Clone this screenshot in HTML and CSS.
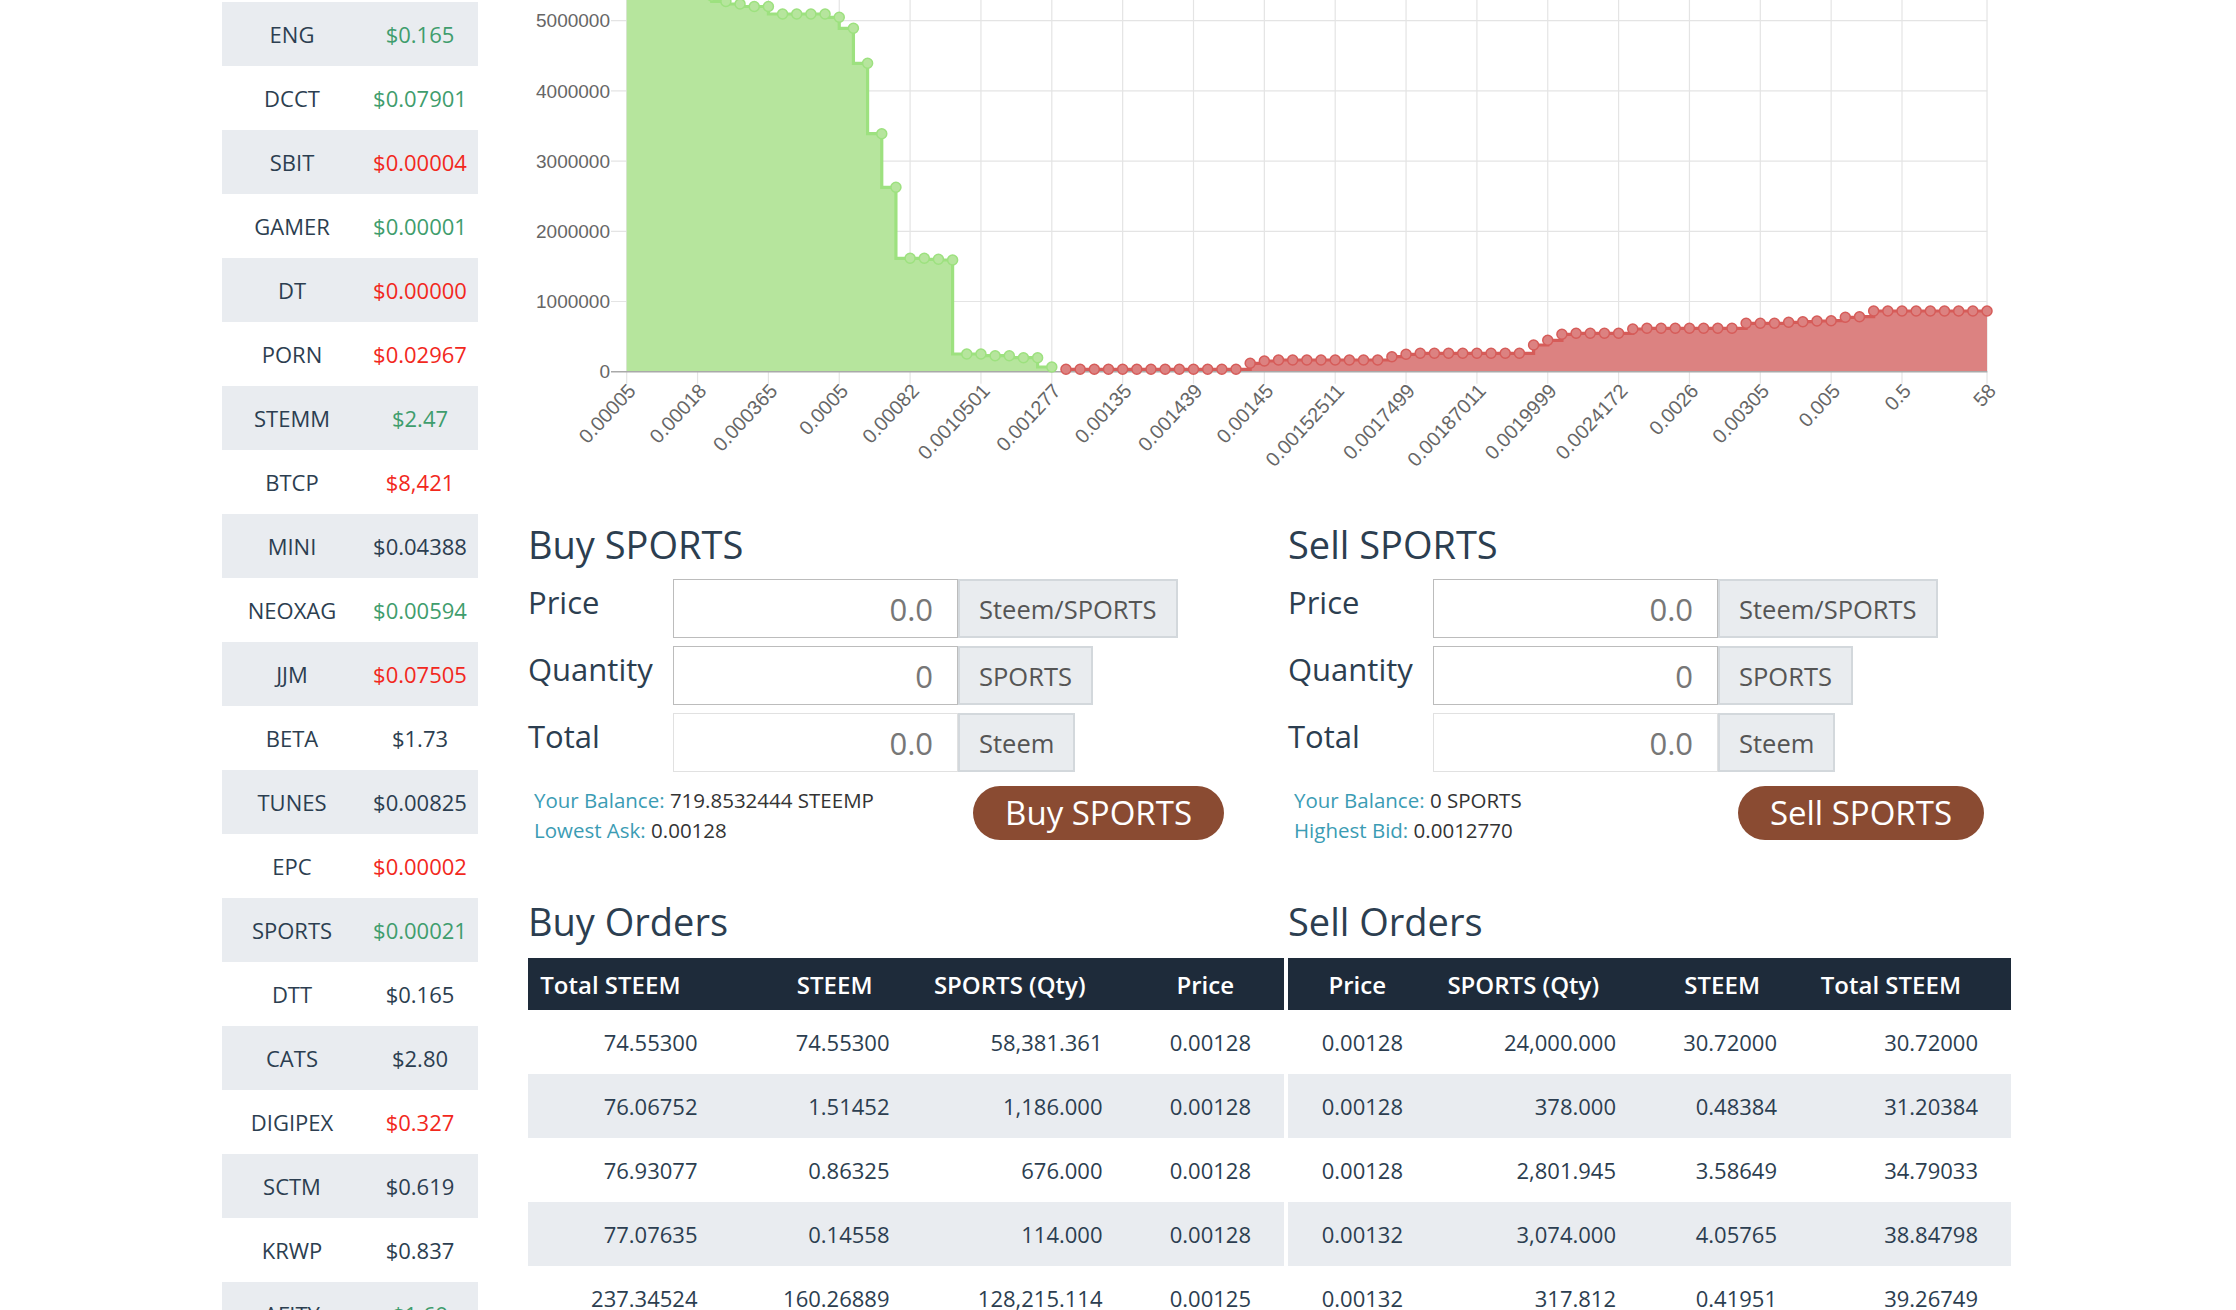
FILE: index.html
```html
<!DOCTYPE html>
<html lang="en">
<head>
<meta charset="utf-8">
<title>SPORTS Market</title>
<link rel="stylesheet" href="styles.css">
</head>
<body>
<div class="layout">
  <aside class="markets">
    <table class="market-table">
      <colgroup><col class="c-sym"><col class="c-px"></colgroup>
      <tbody>
        <tr><td>ENG</td><td class="up">$0.165</td></tr>
        <tr><td>DCCT</td><td class="up">$0.07901</td></tr>
        <tr><td>SBIT</td><td class="down">$0.00004</td></tr>
        <tr><td>GAMER</td><td class="up">$0.00001</td></tr>
        <tr><td>DT</td><td class="down">$0.00000</td></tr>
        <tr><td>PORN</td><td class="down">$0.02967</td></tr>
        <tr><td>STEMM</td><td class="up">$2.47</td></tr>
        <tr><td>BTCP</td><td class="down">$8,421</td></tr>
        <tr><td>MINI</td><td>$0.04388</td></tr>
        <tr><td>NEOXAG</td><td class="up">$0.00594</td></tr>
        <tr><td>JJM</td><td class="down">$0.07505</td></tr>
        <tr><td>BETA</td><td>$1.73</td></tr>
        <tr><td>TUNES</td><td>$0.00825</td></tr>
        <tr><td>EPC</td><td class="down">$0.00002</td></tr>
        <tr><td>SPORTS</td><td class="up">$0.00021</td></tr>
        <tr><td>DTT</td><td>$0.165</td></tr>
        <tr><td>CATS</td><td>$2.80</td></tr>
        <tr><td>DIGIPEX</td><td class="down">$0.327</td></tr>
        <tr><td>SCTM</td><td>$0.619</td></tr>
        <tr><td>KRWP</td><td>$0.837</td></tr>
        <tr><td>AFITY</td><td class="up">$1.69</td></tr>
      </tbody>
    </table>
  </aside>

  <main class="exchange">
    <svg id="depth" class="depth-chart" width="1483" height="500" viewBox="0 0 1483 500" xmlns="http://www.w3.org/2000/svg"></svg>

    <section class="trade-forms">
      <form class="trade-form">
        <h2 class="form-title">Buy SPORTS</h2>
        <div class="field-row">
          <label class="field-label">Price</label>
          <input class="field-input" type="text" value="0.0">
          <span class="field-addon">Steem/SPORTS</span>
        </div>
        <div class="field-row">
          <label class="field-label">Quantity</label>
          <input class="field-input" type="text" value="0">
          <span class="field-addon">SPORTS</span>
        </div>
        <div class="field-row last">
          <label class="field-label">Total</label>
          <input class="field-input readonly" type="text" value="0.0" readonly>
          <span class="field-addon">Steem</span>
        </div>
        <div class="trade-footer">
          <div class="balance">
            <div><span class="k">Your Balance:</span> 719.8532444 STEEMP</div>
            <div><span class="k">Lowest Ask:</span> 0.00128</div>
          </div>
          <button class="trade-btn" type="button">Buy SPORTS</button>
        </div>
      </form>

      <form class="trade-form">
        <h2 class="form-title">Sell SPORTS</h2>
        <div class="field-row">
          <label class="field-label">Price</label>
          <input class="field-input" type="text" value="0.0">
          <span class="field-addon">Steem/SPORTS</span>
        </div>
        <div class="field-row">
          <label class="field-label">Quantity</label>
          <input class="field-input" type="text" value="0">
          <span class="field-addon">SPORTS</span>
        </div>
        <div class="field-row last">
          <label class="field-label">Total</label>
          <input class="field-input readonly" type="text" value="0.0" readonly>
          <span class="field-addon">Steem</span>
        </div>
        <div class="trade-footer">
          <div class="balance">
            <div><span class="k">Your Balance:</span> 0 SPORTS</div>
            <div><span class="k">Highest Bid:</span> 0.0012770</div>
          </div>
          <button class="trade-btn" type="button">Sell SPORTS</button>
        </div>
      </form>
    </section>

    <section class="orders">
      <div class="order-col">
        <h2 class="orders-title">Buy Orders</h2>
        <table class="order-table">
          <colgroup><col class="b1"><col class="b2"><col class="b3"><col class="b4"></colgroup>
          <thead><tr><th>Total STEEM</th><th>STEEM</th><th>SPORTS (Qty)</th><th>Price</th></tr></thead>
          <tbody>
            <tr><td>74.55300</td><td>74.55300</td><td>58,381.361</td><td>0.00128</td></tr>
            <tr><td>76.06752</td><td>1.51452</td><td>1,186.000</td><td>0.00128</td></tr>
            <tr><td>76.93077</td><td>0.86325</td><td>676.000</td><td>0.00128</td></tr>
            <tr><td>77.07635</td><td>0.14558</td><td>114.000</td><td>0.00128</td></tr>
            <tr><td>237.34524</td><td>160.26889</td><td>128,215.114</td><td>0.00125</td></tr>
          </tbody>
        </table>
      </div>
      <div class="order-col">
        <h2 class="orders-title">Sell Orders</h2>
        <table class="order-table">
          <colgroup><col class="s1"><col class="s2"><col class="s3"><col class="s4"></colgroup>
          <thead><tr><th>Price</th><th>SPORTS (Qty)</th><th>STEEM</th><th>Total STEEM</th></tr></thead>
          <tbody>
            <tr><td>0.00128</td><td>24,000.000</td><td>30.72000</td><td>30.72000</td></tr>
            <tr><td>0.00128</td><td>378.000</td><td>0.48384</td><td>31.20384</td></tr>
            <tr><td>0.00128</td><td>2,801.945</td><td>3.58649</td><td>34.79033</td></tr>
            <tr><td>0.00132</td><td>3,074.000</td><td>4.05765</td><td>38.84798</td></tr>
            <tr><td>0.00132</td><td>317.812</td><td>0.41951</td><td>39.26749</td></tr>
          </tbody>
        </table>
      </div>
    </section>
  </main>
</div>
<script src="script.js"></script>
</body>
</html>
```

FILE: styles.css
```css
* { box-sizing: border-box; }
html, body { margin: 0; padding: 0; background: #fff; }
body {
  font-family: "Open Sans", "Liberation Sans", sans-serif;
  color: #2c3e50;
  height: 1310px;
  overflow: hidden;
}
.layout {
  display: flex;
  align-items: flex-start;
  gap: 50px;
  padding-left: 222px;
}

/* sidebar market list */
.markets { width: 256px; flex: none; margin-top: 2px; }
.market-table {
  width: 256px;
  border-collapse: collapse;
  table-layout: fixed;
  font-size: 22px;
}
.market-table .c-sym { width: 140px; }
.market-table .c-px { width: 116px; }
.market-table td {
  height: 64px;
  padding: 0;
  text-align: center;
  vertical-align: middle;
  white-space: nowrap;
}
.market-table tr:nth-child(odd) td { background: #e9ecf0; }
.up { color: #3f9d6d; }
.down { color: #f2281d; }

/* main column */
.exchange { width: 1483px; flex: none; }
.depth-chart { display: block; width: 1483px; height: 500px; overflow: hidden; }
.depth-chart .grid-line { stroke: #e4e4e4; stroke-width: 1.2; }
.depth-chart .axis-line { stroke: #a9a9a9; stroke-width: 1.4; }
.depth-chart .bid-fill { fill: #b6e59d; }
.depth-chart .bid-line { fill: none; stroke: #9de17f; stroke-width: 3.2; }
.depth-chart .bid-dot { fill: #b6e59d; stroke: #9de17f; stroke-width: 1.5; }
.depth-chart .ask-fill { fill: #dc8281; }
.depth-chart .ask-line { fill: none; stroke: #d65c59; stroke-width: 3.2; }
.depth-chart .ask-dot { fill: #dc8281; stroke: #d65c59; stroke-width: 1.5; }
.depth-chart .ylab,
.depth-chart .xlab {
  font-family: "Liberation Sans", Arial, sans-serif;
  fill: #666;
}
.depth-chart .ylab { font-size: 19px; }
.depth-chart .xlab { font-size: 20px; }

/* buy / sell forms */
.trade-forms {
  display: grid;
  grid-template-columns: 756px 723px;
  column-gap: 4px;
  margin-top: 21px;
}
.trade-form { width: 696px; margin: 0; }
.form-title {
  margin: 0 0 12px;
  font-size: 38px;
  line-height: 46px;
  font-weight: 400;
  color: #2c3e50;
}
.field-row { display: flex; height: 59px; margin-bottom: 8px; }
.field-row.last { margin-bottom: 0; }
.field-label {
  width: 145px;
  flex: none;
  font-size: 31px;
  line-height: 46px;
  color: #2c3e50;
}
.field-input {
  width: 285px;
  height: 59px;
  flex: none;
  margin: 0;
  padding: 0 24px 0 10px;
  border: 1px solid #bcbcbc;
  border-radius: 0;
  background: #fff;
  font-family: "Open Sans", sans-serif;
  font-size: 31px;
  color: #777;
  text-align: right;
  outline: none;
}
.field-input.readonly { border-color: #e1e1e1; }
.field-addon {
  display: flex;
  align-items: center;
  height: 59px;
  padding: 0 19px;
  background: #e9ecef;
  border: 2px solid #d3d8dc;
  font-size: 25.5px;
  color: #555;
  white-space: nowrap;
}
.trade-footer {
  display: flex;
  justify-content: space-between;
  align-items: flex-start;
  margin-top: 13px;
}
.balance {
  padding-left: 6px;
  font-size: 20.5px;
  line-height: 30px;
  color: #333;
}
.balance .k { color: #3b9cb4; }
.trade-btn {
  height: 54px;
  margin-top: 1px;
  padding: 0 32px;
  border: 0;
  border-radius: 27px;
  background: #8a4b32;
  color: #fff;
  font-family: "Open Sans", sans-serif;
  font-size: 33px;
  line-height: 54px;
  cursor: pointer;
}

/* order books */
.orders {
  display: grid;
  grid-template-columns: 756px 723px;
  column-gap: 4px;
  margin-top: 53px;
}
.orders-title {
  margin: 0 0 14px;
  font-size: 38px;
  line-height: 46px;
  font-weight: 400;
  color: #2c3e50;
}
.order-table {
  width: 100%;
  border-collapse: collapse;
  table-layout: fixed;
  font-size: 22px;
}
.order-table .b1 { width: 202.5px; }
.order-table .b2 { width: 192px; }
.order-table .b3 { width: 213px; }
.order-table .b4 { width: 148.5px; }
.order-table .s1 { width: 148px; }
.order-table .s2 { width: 213px; }
.order-table .s3 { width: 161px; }
.order-table .s4 { width: 201px; }
.order-table th {
  height: 52px;
  padding: 0 50px 0 0;
  background: #1e2b3a;
  color: #fff;
  font-size: 24px;
  font-weight: 600;
  text-align: right;
  white-space: nowrap;
}
.order-table td {
  height: 64px;
  padding: 0 33px 0 0;
  text-align: right;
  white-space: nowrap;
  color: #2c3e50;
}
.order-table tbody tr:nth-child(even) td { background: #e9ecf0; }
```

FILE: script.js
```js
(function () {
  var svg = document.getElementById('depth');
  var NS = 'http://www.w3.org/2000/svg';
  var x0 = 98.7, step = 14.17, yZero = 371.7, perM = 70.2;
  var gridLeft = 83, gridRight = 1459.3;
  function X(i) { return x0 + i * step; }
  function el(tag, attrs, parent) {
    var e = document.createElementNS(NS, tag);
    for (var k in attrs) e.setAttribute(k, attrs[k]);
    (parent || svg).appendChild(e);
    return e;
  }

  var bids = [-40, -34, -28, -22, -16, -10, -4, 1.5, 4, 6.5, 6.5, 14, 14, 14, 14, 17.3, 28.3,
    63.3, 133.7, 187.3, 258.3, 258.3, 259.3, 260, 354, 354, 355.7, 355.7, 357.7, 357.7, 367];
  var askSpec = [[13, 369.3], [1, 363.3], [1, 361], [8, 360], [1, 356.7], [1, 354.3], [8, 353.3],
    [1, 345], [1, 340.3], [1, 334.3], [4, 333.3], [1, 329], [7, 328.3], [3, 323.3], [1, 322.3],
    [1, 321.7], [1, 321], [1, 320.7], [1, 317.3], [1, 316.7], [9, 311]];
  var asks = [];
  askSpec.forEach(function (s) { for (var k = 0; k < s[0]; k++) asks.push(s[1]); });
  var askStart = bids.length; // 31

  var ticks = [];
  for (var t = 0; t <= 90; t += 5) ticks.push(t);
  ticks.push(96);
  var labels = ['0.00005', '0.00018', '0.000365', '0.0005', '0.00082', '0.0010501', '0.001277',
    '0.00135', '0.001439', '0.00145', '0.00152511', '0.0017499', '0.00187011', '0.0019999',
    '0.0024172', '0.0026', '0.00305', '0.005', '0.5', '58'];

  var grid = el('g', {});
  for (var k = 1; k <= 6; k++) {
    var y = yZero - k * perM;
    el('line', { x1: gridLeft, x2: gridRight, y1: y, y2: y, 'class': 'grid-line' }, grid);
  }
  ticks.forEach(function (i) {
    el('line', { x1: X(i), x2: X(i), y1: -80, y2: yZero + 12, 'class': 'grid-line' }, grid);
  });

  // bids: step before
  var d = 'M' + X(0) + ' ' + bids[0];
  for (var i = 1; i < bids.length; i++) d += ' V' + bids[i] + ' H' + X(i);
  el('path', { d: d + ' V' + yZero + ' H' + X(0) + ' Z', 'class': 'bid-fill' });

  // asks: step after
  var a = 'M' + X(askStart) + ' ' + asks[0];
  for (var j = 1; j < asks.length; j++) a += ' H' + X(askStart + j) + ' V' + asks[j];
  el('path', { d: a + ' V' + yZero + ' H' + X(askStart) + ' Z', 'class': 'ask-fill' });

  el('line', { x1: gridLeft, x2: gridRight, y1: yZero, y2: yZero, 'class': 'axis-line' });

  el('path', { d: d, 'class': 'bid-line' });
  el('path', { d: a, 'class': 'ask-line' });

  for (var b = 0; b < bids.length; b++) el('circle', { cx: X(b), cy: bids[b], r: 5, 'class': 'bid-dot' });
  for (var c = 0; c < asks.length; c++) el('circle', { cx: X(askStart + c), cy: asks[c], r: 5, 'class': 'ask-dot' });

  var ylabels = ['0', '1000000', '2000000', '3000000', '4000000', '5000000'];
  ylabels.forEach(function (txt, n) {
    var tx = el('text', { x: 82, y: yZero - n * perM, dy: '0.35em', 'text-anchor': 'end', 'class': 'ylab' });
    tx.textContent = txt;
  });

  ticks.forEach(function (i, n) {
    var tx = el('text', {
      transform: 'translate(' + (X(i) + 5) + ',387) rotate(-47)',
      dy: '0.35em', 'text-anchor': 'end', 'class': 'xlab'
    });
    tx.textContent = labels[n];
  });
})();
```
